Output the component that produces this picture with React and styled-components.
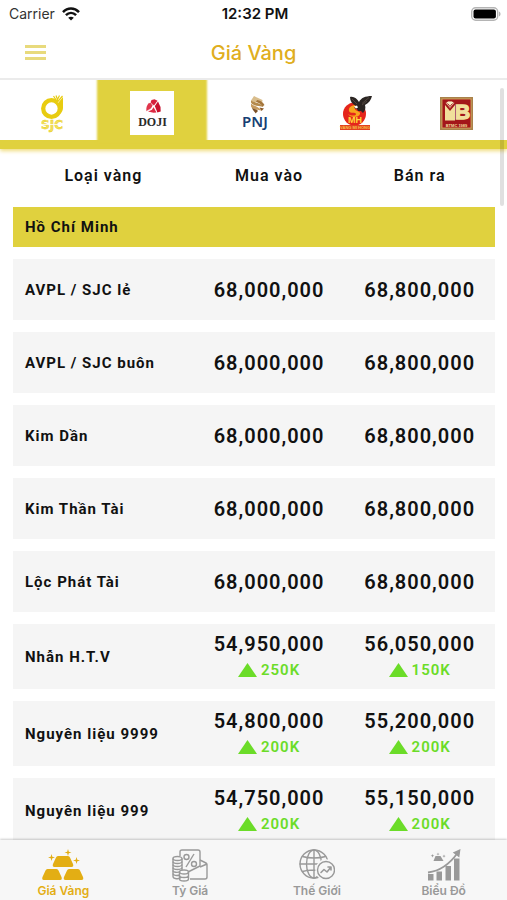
import React, { useState } from "react"
import styled, { createGlobalStyle } from "styled-components"

const sellers = [
    { id: "sjc", label: "SJC", Logo: SjcLogo },
    { id: "doji", label: "DOJI", Logo: DojiLogo },
    { id: "pnj", label: "PNJ", Logo: PnjLogo },
    { id: "mh", label: "Mi Hồng", Logo: MiHongLogo },
    { id: "btmc", label: "Bảo Tín Minh Châu", Logo: BtmcLogo },
]

const prices = [
    { name: "AVPL / SJC lẻ", buy: "68,000,000", sell: "68,800,000" },
    { name: "AVPL / SJC buôn", buy: "68,000,000", sell: "68,800,000" },
    { name: "Kim Dần", buy: "68,000,000", sell: "68,800,000" },
    { name: "Kim Thần Tài", buy: "68,000,000", sell: "68,800,000" },
    { name: "Lộc Phát Tài", buy: "68,000,000", sell: "68,800,000" },
    { name: "Nhẫn H.T.V", buy: "54,950,000", buyUp: "250K", sell: "56,050,000", sellUp: "150K" },
    { name: "Nguyên liệu 9999", buy: "54,800,000", buyUp: "200K", sell: "55,200,000", sellUp: "200K" },
    { name: "Nguyên liệu 999", buy: "54,750,000", buyUp: "200K", sell: "55,150,000", sellUp: "200K" },
]

const pages = [
    { label: "Giá Vàng", Icon: GoldIcon },
    { label: "Tỷ Giá", Icon: RateIcon },
    { label: "Thế Giới", Icon: WorldIcon },
    { label: "Biểu Đồ", Icon: ChartIcon },
]

function App() {
    const [seller, setSeller] = useState("doji")
    const [page, setPage] = useState("Giá Vàng")

    return (
        <Screen>
            <GlobalStyle />
            <StatusBar>
                <Carrier>
                    Carrier
                    <WifiIcon />
                </Carrier>
                <Clock>12:32 PM</Clock>
                <BatteryIcon />
            </StatusBar>
            <Header>
                <MenuButton type="button" aria-label="Menu">
                    <MenuLine />
                    <MenuLine />
                    <MenuLine />
                </MenuButton>
                <Title>Giá Vàng</Title>
            </Header>
            <Content>
                <Sellers>
                    {sellers.map(({ id, label, Logo }) => (
                        <SellerButton
                            key={id}
                            type="button"
                            aria-label={label}
                            aria-pressed={id === seller}
                            $active={id === seller}
                            onClick={() => setSeller(id)}
                        >
                            <Logo />
                        </SellerButton>
                    ))}
                </Sellers>
                <List>
                    <PriceTable>
                        <thead>
                            <tr>
                                <HeadCell scope="col" $wide>Loại vàng</HeadCell>
                                <HeadCell scope="col">Mua vào</HeadCell>
                                <HeadCell scope="col">Bán ra</HeadCell>
                            </tr>
                        </thead>
                        <tbody>
                            <tr>
                                <CityCell scope="rowgroup" colSpan={3}>Hồ Chí Minh</CityCell>
                            </tr>
                            {prices.map(item => (
                                <PriceRow key={item.name}>
                                    <NameCell scope="row">{item.name}</NameCell>
                                    <PriceCell>
                                        <Price>{item.buy}</Price>
                                        {item.buyUp && <Change><UpArrow />{item.buyUp}</Change>}
                                    </PriceCell>
                                    <PriceCell>
                                        <Price>{item.sell}</Price>
                                        {item.sellUp && <Change><UpArrow />{item.sellUp}</Change>}
                                    </PriceCell>
                                </PriceRow>
                            ))}
                        </tbody>
                    </PriceTable>
                </List>
                <ScrollThumb />
            </Content>
            <TabBar>
                {pages.map(({ label, Icon }) => (
                    <TabButton
                        key={label}
                        type="button"
                        $active={label === page}
                        onClick={() => setPage(label)}
                    >
                        <Icon />
                        {label}
                    </TabButton>
                ))}
            </TabBar>
        </Screen>
    )
}

export default App

function WifiIcon() {
    return (
        <svg width="18" height="14" viewBox="0 0 18 14" fill="none" stroke="#111" strokeWidth="2.5">
            <path d="M1 5.200C5.600.3 12.400.3 17 5.200" />
            <path d="M3.900 8.200c3-3 7.200-3 10.200 0" />
            <path d="M9 13.600 6.200 10.800c1.600-1.500 4-1.500 5.600 0z" fill="#111" stroke="none" />
        </svg>
    )
}

function BatteryIcon() {
    return (
        <svg width="30" height="14" viewBox="0 0 30 14">
            <rect x=".7" y=".7" width="26" height="12.600" rx="4" fill="#fff" stroke="#b4b4b4" strokeWidth="1.400" />
            <rect x="2.500" y="2.500" width="22.400" height="9" rx="2" fill="#000" />
            <path d="M28 4.500c2 .8 2 4.200 0 5z" fill="#b4b4b4" />
        </svg>
    )
}

function UpArrow() {
    return (
        <svg width="19" height="14" viewBox="0 0 19 14">
            <path d="M9.500 0 19 14H0z" fill="#6bdc28" />
        </svg>
    )
}

function SjcLogo() {
    return (
        <svg width="44" height="44" viewBox="0 0 44 44">
            <circle cx="22.500" cy="17.500" r="8.300" fill="none" stroke="#e8cc10" strokeWidth="4.300" />
            <path d="M24 3h11v9h-6z" fill="#fff" />
            <path d="M34 6v11c0 2-1 4-2.500 5.500l-2.500-2.500V12z" fill="#e8cc10" />
            <path d="m24.500 5 4 6 5-6M27 4.500l1.500 4 2-4M28.500 7v5" fill="none" stroke="#e8cc10" strokeWidth="1.200" />
            <text x="23" y="38" textAnchor="middle" fontFamily="DejaVu Sans, sans-serif" fontSize="12" fontWeight="700" fill="#f3e05c" stroke="#e8cc10" strokeWidth=".4">SJC</text>
            <path d="M11 33.500h24" stroke="#fff" strokeWidth=".8" />
        </svg>
    )
}

function DojiLogo() {
    return (
        <svg width="44" height="44" viewBox="0 0 44 44">
            <rect width="44" height="44" fill="#fff" />
            <path d="m21.500 9 3-.8 3 1.600-3.500 4.800-4-1.800z" fill="#d61f3c" />
            <path d="m19 11.800 3.600 2.400-1.600 3.600-4.500 2.400c-.6-3 .2-6 2.500-8.400z" fill="#e0354c" />
            <path d="m28 10.600 2.500 5.400.2 4.500-3.400 1-2.600-6.200z" fill="#c8102e" />
            <path d="m23.500 16 3 5.500-3 .3-5.500-1.200 4-1.800z" fill="#dc2b45" />
            <path d="m20 11 4.500 4.300M24.500 15.300 17 20M24.500 15.300l2.500 6.500" fill="none" stroke="#fff" strokeWidth=".5" />
            <text x="22.500" y="35" textAnchor="middle" fontFamily="Liberation Serif, serif" fontSize="12" fontWeight="700" fill="#2a2a2a">DOJI</text>
        </svg>
    )
}

function PnjLogo() {
    return (
        <svg width="44" height="44" viewBox="0 0 44 44">
            <path d="m22 5 3 1.500 5.500 2.500-.5 4-5-2-5 .5-1-2z" fill="#d9bd8c" />
            <path d="M19 9.500c3 2.500 9 1.500 12.500 6.500-4-1.500-10-.5-12.500-4.500z" fill="#b58a4c" />
            <path d="M25 9c3 .5 6 2 7.500 5l-2 1.500c-1.500-2.500-4-4-6.500-4.500z" fill="#a4753a" />
            <path d="M19 12.500c3 3 7 2.500 10.500 7-4-1.200-9-.8-10.500-4z" fill="#c79b5f" />
            <path d="M20 16.500c2 2 5 1.500 6 3.500l-2.500 2.500c-.5-2-3-3-3.500-6z" fill="#7d5226" />
            <path d="m27.500 16.500 4.500 1-2.500 2.500z" fill="#8c5a27" />
            <text x="23" y="36" textAnchor="middle" fontFamily="Noto Sans, sans-serif" fontSize="15" fontWeight="600" fill="#173f74">PNJ</text>
        </svg>
    )
}

function MiHongLogo() {
    return (
        <svg width="44" height="44" viewBox="0 0 44 44">
            <circle cx="21.500" cy="23" r="11.500" fill="#e5251b" />
            <path d="M25 15c-5-2-10 1-9 5 1 3 7 1 7 3s-5 2-8 0c2 4 11 4 12 0 1-3-5-3-5-5s2-2 4-1z" fill="#f7a51c" />
            <path d="M17 6c4-1 7 2 9 5 2-4 6-6 13-6-1 4-3 7-7 9 1 3 0 6-2 8l-2-2-3 0-1-2-3-1 2-2c-4-2-6-5-6-9z" fill="#2b2523" />
            <path d="m19 8 5 5M36 6.500l-7 6M34 10l-5 4" stroke="#6a5a50" strokeWidth=".6" />
            <path d="m21 15.500 3-1 1 2-2 1z" fill="#fff" />
            <text x="22" y="32" textAnchor="middle" fontFamily="Liberation Sans, sans-serif" fontSize="9" fontWeight="700" fill="#ffd83a">MH</text>
            <path d="M7 34h30v5H7z" fill="#e2401f" />
            <text x="22" y="38" textAnchor="middle" fontFamily="Liberation Sans, sans-serif" fontSize="4" fontWeight="700" fill="#f9c04a">VÀNG MI HỒNG</text>
        </svg>
    )
}

function BtmcLogo() {
    return (
        <svg width="44" height="44" viewBox="0 0 44 44">
            <rect x="6" y="6" width="33" height="33" fill="#a9824b" />
            <rect x="8" y="8" width="29" height="29" fill="#a3161a" stroke="#d9ad62" strokeWidth=".8" />
            <path d="M11 14l5 6 5-6v15.500H11z" fill="#f1df9b" />
            <path d="m11.500 12 2.500-2h4l2.500 2-4.500 5.500z" fill="#f8edc2" stroke="#a3161a" strokeWidth=".8" />
            <path d="m13.500 12.500 2.500 3 2.500-3" fill="none" stroke="#a3161a" strokeWidth="1" />
            <text x="28.500" y="28" textAnchor="middle" fontFamily="Liberation Sans, sans-serif" fontSize="21" fontWeight="700" fill="#f1df9b" stroke="#f1df9b" strokeWidth="1.400">B</text>
            <text x="22.500" y="36" textAnchor="middle" fontFamily="Liberation Sans, sans-serif" fontSize="4" fontWeight="700" fill="#f1df9b">BTMC 1989</text>
        </svg>
    )
}

function GoldIcon() {
    return (
        <svg width="42" height="34" viewBox="0 0 42 34" fill="currentColor">
            <path d="M16 8h10q1.500 0 2 1.500l3 6.500q1 3-1.500 3h-17q-2.500 0-1.500-3l3-6.500Q14.500 8 16 8z" />
            <path d="M5.500 21h9q1.500 0 2 1.500l3 6.500q1 3-1.500 3H2q-2.500 0-1.500-3l3-6.500Q4 21 5.500 21z" />
            <path d="M27 21h9q1.500 0 2 1.500l3 6.500q1 3-1.500 3h-16q-2.500 0-1.500-3l3-6.500q.5-1.500 2-1.500z" />
            <path d="m26 1 .8 2.700 2.700.8-2.700.8L26 8l-.8-2.700-2.700-.8 2.700-.8z" />
            <path d="m9.500 6 .8 2.700 2.700.8-2.700.8-.8 2.700-.8-2.700L6 9.500l2.700-.8z" />
            <path d="m34.500 9 .8 2.700 2.700.8-2.700.8-.8 2.700-.8-2.700-2.700-.8 2.700-.8z" />
        </svg>
    )
}

function RateIcon() {
    return (
        <svg width="36" height="34" viewBox="0 0 36 34" fill="none" stroke="currentColor" strokeWidth="1.400" strokeLinejoin="round">
            <path d="M8 8V4q0-2 2-2h16q2 0 2 2v14L16 24" />
            <path d="m28 12 6 3q1 .5 1 1.500V29q0 2-2 2H18M35 16l-7 3" />
            <circle cx="14.500" cy="9" r="2.500" />
            <circle cx="22" cy="16" r="2.500" />
            <path d="m22 6-8 13" />
            <ellipse cx="5.500" cy="10.500" rx="4.500" ry="2" />
            <path d="M1 10.500v18c0 2.500 6 3 8 1M10 10.500V22" />
            <path d="M1 13.500c0 2.600 9 2.600 9 0M1 16.500c0 2.600 9 2.600 9 0M1 19.500c0 2.600 9 2.600 9 0M1 22.500c0 2 5 2.500 7 1M1 25.500c0 2 4 2.500 7 1.500" />
            <ellipse cx="12" cy="24" rx="4.500" ry="2" fill="#f7f7f7" />
            <path d="M7.500 24v7c0 2.600 9 2.600 9 0v-7M7.500 27.500c0 2.600 9 2.600 9 0" />
        </svg>
    )
}

function WorldIcon() {
    return (
        <svg width="36" height="34" viewBox="0 0 36 34" fill="none" stroke="currentColor" strokeWidth="1.400" strokeLinecap="round" strokeLinejoin="round">
            <circle cx="15" cy="16" r="14" />
            <ellipse cx="15" cy="16" rx="7.500" ry="14" />
            <path d="M15 2v28M1 16h28M3.500 8.500c6 2 17 2 23 0M3.500 23.500c6-2 17-2 23 0" />
            <circle cx="27" cy="22" r="10" fill="#f7f7f7" stroke="#f7f7f7" />
            <circle cx="27" cy="22" r="8.500" fill="#f7f7f7" />
            <path d="m22 24.500 3-3 3 2.500 4-5M29 19h3v3" strokeWidth="1.600" />
        </svg>
    )
}

function ChartIcon() {
    return (
        <svg width="36" height="34" viewBox="0 0 36 34" fill="currentColor">
            <path d="M2 26h5.500v6.500H2zM10.500 23.500H16v9h-5.500zM19.500 18H25v14.500h-5.500zM28 10.500h5.500v22H28z" />
            <path d="M2 24.500C14 23 23 17 31.500 5" fill="none" stroke="currentColor" strokeWidth="1.800" />
            <path d="m34.500 1-1.200 8.500-6.500-5z" />
            <path d="M9.500 8h5l3 5H7.500z" />
            <path d="m12 4.500.4 1.200 1.200.3-1.200.4-.4 1.200-.4-1.200-1.200-.4 1.200-.3zM6.500 6l.5 1.300 1.300.5L7 8.300l-.5 1.300L6 8.300l-1.300-.5L6 7.300zM18 6.500l.5 1.200 1.200.4-1.200.5-.5 1.200-.5-1.200-1.200-.5 1.200-.4z" />
        </svg>
    )
}

const GlobalStyle = createGlobalStyle`
    * {
        box-sizing: border-box;
    }
    body {
        margin: 0;
        background: #fff;
        color: #111;
        font-family: Roboto, "Noto Sans", sans-serif;
    }
    button {
        border: 0;
        padding: 0;
        background: none;
        font: inherit;
        color: inherit;
        cursor: pointer;
    }
    svg {
        display: block;
        flex-shrink: 0;
    }
`

const Screen = styled.div`
    height: 100vh;
    display: flex;
    flex-direction: column;
    overflow: hidden;
`

const StatusBar = styled.div`
    height: 27px;
    padding: 0 6px 0 9px;
    display: grid;
    grid-template-columns: 1fr auto 1fr;
    align-items: center;
    font-family: Inter, Roboto, sans-serif;
    font-size: 14px;
    > :last-child {
        justify-self: end;
    }
`

const Carrier = styled.div`
    display: flex;
    align-items: center;
    gap: 7px;
    color: #333;
`

const Clock = styled.time`
    font-size: 15px;
    font-weight: 600;
`

const Header = styled.header`
    height: 53px;
    padding: 0 25px;
    display: grid;
    grid-template-columns: 1fr auto 1fr;
    align-items: center;
    border-bottom: 2px solid #ebebeb;
`

const MenuButton = styled.button`
    width: 21px;
    display: flex;
    flex-direction: column;
    gap: 3px;
`

const MenuLine = styled.span`
    width: 100%;
    height: 3px;
    background: #e8da7c;
`

const Title = styled.h1`
    margin: 0;
    font-family: Inter, Roboto, sans-serif;
    font-size: 20px;
    font-weight: 500;
    color: #dfae20;
`

const Content = styled.main`
    position: relative;
    flex: 1;
    min-height: 0;
    display: flex;
    flex-direction: column;
`

const Sellers = styled.div`
    display: flex;
    border-bottom: 9px solid #e0d13e;
    box-shadow: 0 2px 4px #f0dc7c;
    clip-path: inset(0 0 -8px 0);
`

const SellerButton = styled.button`
    flex: 1;
    height: 60px;
    padding-bottom: 5px;
    display: flex;
    justify-content: center;
    align-items: flex-end;
    background: ${props => props.$active ? "#e0d13e" : "transparent"};
    box-shadow: ${props => props.$active ? "0 0 2px 4px #e0d13e" : "none"};
`

const List = styled.div`
    flex: 1;
    min-height: 0;
    padding: 0 12px 0 13px;
    overflow-y: auto;
    scrollbar-width: none;
`

const PriceTable = styled.table`
    width: 100%;
    table-layout: fixed;
    border-collapse: separate;
    border-spacing: 0 12px;
    letter-spacing: 1px;
`

const HeadCell = styled.th`
    width: ${props => props.$wide ? "37.5%" : "auto"};
    height: 34px;
    padding: 0 0 6px;
    font-size: 16px;
    font-weight: 600;
`

const CityCell = styled.th`
    height: 40px;
    padding: 0 12px;
    background: #e0d13e;
    font-size: 15px;
    text-align: left;
`

const PriceRow = styled.tr`
    height: 61px;
    background: #f5f5f5;
`

const NameCell = styled.th`
    padding: 0 12px;
    font-size: 15px;
    text-align: left;
    white-space: nowrap;
`

const PriceCell = styled.td`
    padding: 7px 0 6px;
    text-align: center;
`

const Price = styled.div`
    font-size: 20px;
    line-height: 26px;
    font-weight: 600;
`

const Change = styled.div`
    display: flex;
    justify-content: center;
    align-items: center;
    gap: 4px;
    font-size: 15px;
    line-height: 26px;
    font-weight: 600;
    color: #6bdc28;
`

const ScrollThumb = styled.span`
    position: absolute;
    top: 8px;
    right: 3px;
    width: 4px;
    height: 118px;
    border-radius: 2px;
    background: rgba(0, 0, 0, 0.12);
`

const TabBar = styled.nav`
    position: relative;
    height: 60px;
    display: flex;
    background: #f7f7f7;
    box-shadow: 0 -1px 2px rgba(0, 0, 0, 0.2);
`

const TabButton = styled.button`
    flex: 1;
    padding-top: 8px;
    display: flex;
    flex-direction: column;
    align-items: center;
    gap: 1px;
    font-family: Inter, Roboto, sans-serif;
    font-size: 12px;
    line-height: 16px;
    font-weight: 600;
    color: ${props => props.$active ? "#e3ae14" : "#999"};
`
